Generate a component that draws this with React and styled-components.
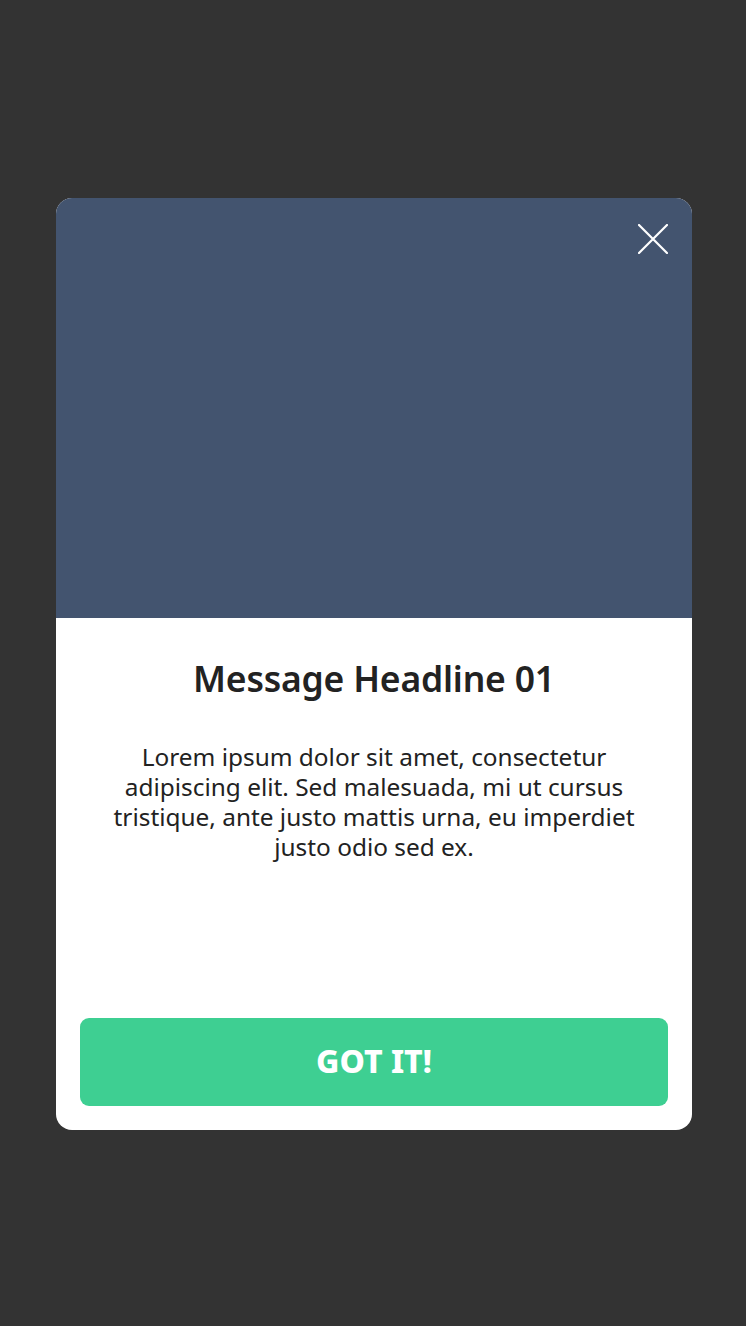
import React from 'react'
import styled, { createGlobalStyle } from 'styled-components'

const Global = createGlobalStyle`
  html, body {
    margin: 0;
    padding: 0;
    background: #333333;
  }
  body {
    font-family: "Noto Sans", Lato, sans-serif;
  }
`

const Screen = styled.div`
  width: 746px;
  height: 1326px;
  box-sizing: border-box;
  padding: 198px 0 0 56px;
  display: flex;
  align-items: flex-start;
`

const Card = styled.div`
  width: 636px;
  height: 932px;
  background: #ffffff;
  border-radius: 16px;
  overflow: hidden;
  display: flex;
  flex-direction: column;
`

const Hero = styled.div`
  position: relative;
  height: 420px;
  background: #43546f;
  flex-shrink: 0;
`

const Close = styled.button`
  position: absolute;
  top: 26px;
  right: 24px;
  width: 30px;
  height: 30px;
  padding: 0;
  border: none;
  background: transparent;
  cursor: pointer;
  svg {
    display: block;
  }
`

const Body = styled.div`
  flex: 1;
  display: flex;
  flex-direction: column;
  align-items: center;
  padding: 38px 24px 24px;
`

const Headline = styled.h1`
  margin: 0;
  font-size: 35.5px;
  font-weight: 600;
  color: #222222;
  line-height: 44px;
  text-align: center;
  letter-spacing: -0.2px;
`

const Text = styled.p`
  margin: 42px 0 0;
  width: 550px;
  font-size: 24.4px;
  line-height: 30px;
  color: #222222;
  text-align: center;
`

const Button = styled.button`
  margin-top: auto;
  width: 100%;
  height: 88px;
  padding: 0 0 4px;
  border: none;
  border-radius: 9px;
  background: #3ecf92;
  color: #ffffff;
  font-family: inherit;
  font-size: 32px;
  font-weight: 800;
  cursor: pointer;
`

const App = () => {
  return (
    <>
      <Global />
      <Screen>
        <Card>
          <Hero>
            <Close aria-label="Close">
              <svg width="30" height="30" viewBox="0 0 30 30">
                <path d="M1 1 L29 29 M29 1 L1 29" stroke="#ffffff" strokeWidth="2.2" strokeLinecap="round" />
              </svg>
            </Close>
          </Hero>
          <Body>
            <Headline>Message Headline 01</Headline>
            <Text>
              Lorem ipsum dolor sit amet, consectetur adipiscing elit. Sed malesuada, mi ut cursus
              tristique, ante justo mattis urna, eu imperdiet justo odio sed ex.
            </Text>
            <Button>GOT IT!</Button>
          </Body>
        </Card>
      </Screen>
    </>
  )
}

export default App
